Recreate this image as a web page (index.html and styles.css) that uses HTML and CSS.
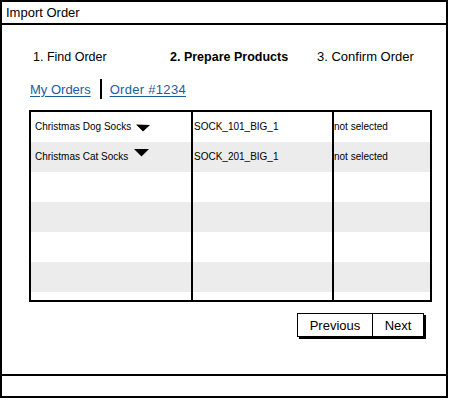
FILE: index.html
```html
<!DOCTYPE html>
<html>
<head>
<meta charset="utf-8">
<link rel="stylesheet" href="styles.css">
</head>
<body>
<div class="window">
  <div class="titlebar">Import Order</div>
  <div class="content">
    <div class="steps">
      <span class="step s1">1. Find Order</span>
      <span class="step s2 active">2. Prepare Products</span>
      <span class="step s3">3. Confirm Order</span>
    </div>
    <div class="crumbs">
      <a class="crumb" href="#">My Orders</a>
      <span class="sep"></span>
      <a class="crumb" href="#">Order #1234</a>
    </div>
    <div class="grid">
      <div class="row">
        <div class="cell c1">Christmas Dog Socks <svg class="tri t1" width="14" height="8" viewBox="0 0 14 8"><path d="M0 0.5 L14 1 L7 7.5 Z" fill="#000"/></svg></div>
        <div class="cell c2">SOCK_101_BIG_1</div>
        <div class="cell c3">not selected</div>
      </div>
      <div class="row alt">
        <div class="cell c1">Christmas Cat Socks <svg class="tri t2" width="15" height="8" viewBox="0 0 15 8"><path d="M0 0 L15 0 L7.5 7.5 Z" fill="#000"/></svg></div>
        <div class="cell c2">SOCK_201_BIG_1</div>
        <div class="cell c3">not selected</div>
      </div>
      <div class="row"><div class="cell c1"></div><div class="cell c2"></div><div class="cell c3"></div></div>
      <div class="row alt"><div class="cell c1"></div><div class="cell c2"></div><div class="cell c3"></div></div>
      <div class="row"><div class="cell c1"></div><div class="cell c2"></div><div class="cell c3"></div></div>
      <div class="row alt"><div class="cell c1"></div><div class="cell c2"></div><div class="cell c3"></div></div>
      <div class="row last"><div class="cell c1"></div><div class="cell c2"></div><div class="cell c3"></div></div>
    </div>
    <div class="actions">
      <div class="btngroup">
        <button class="btn prev">Previous</button>
        <button class="btn next">Next</button>
      </div>
    </div>
  </div>
  <div class="statusbar"></div>
</div>
</body>
</html>
```

FILE: styles.css
```css
html, body {
  margin: 0;
  padding: 0;
  background: #fff;
}
body {
  font-family: "Liberation Sans", Arial, sans-serif;
  color: #000;
}
.window {
  width: 448px;
  height: 398px;
  box-sizing: border-box;
  border: 2px solid #000;
  display: flex;
  flex-direction: column;
}
.titlebar {
  height: 23px;
  box-sizing: border-box;
  border-bottom: 2px solid #000;
  font-size: 13px;
  line-height: 21px;
  padding-left: 4px;
}
.content {
  flex: 1;
  display: flex;
  flex-direction: column;
}
.steps {
  display: flex;
  margin-top: 24px;
  padding-left: 31px;
  font-size: 12.5px;
  line-height: 16px;
}
.s1 { width: 137px; }
.s2 { width: 147px; }
.s3 { font-size: 13px; }
.active { font-weight: bold; }
.crumbs {
  display: flex;
  align-items: center;
  margin-top: 15px;
  padding-left: 28px;
  height: 18px;
  font-size: 13px;
}
.crumb {
  color: #1c5c9c;
  text-decoration: underline;
  text-underline-offset: 2px;
}
.crumb + .sep + .crumb { letter-spacing: 0.3px; }
.sep {
  width: 2px;
  height: 20px;
  background: #000;
  margin: 0 8px 0 9px;
}
.grid {
  margin-top: 12px;
  margin-left: 27px;
  width: 403px;
  box-sizing: border-box;
  border: 2px solid #000;
  display: flex;
  flex-direction: column;
  font-size: 10px;
}
.row {
  display: flex;
  height: 30px;
}
.row.alt { background: #ececec; }
.row.last { height: 8px; }
.cell {
  box-sizing: border-box;
  display: flex;
  align-items: center;
  white-space: nowrap;
  padding-bottom: 2px;
}
.c1 { width: 160px; padding-left: 4px; }
.c2 { width: 141px; border-left: 2px solid #000; padding-left: 1px; }
.c3 { flex: 1; border-left: 2px solid #000; padding-left: 0; }
.tri { margin-left: 5px; }
.tri.t1 { margin-top: 4px; }
.tri.t2 { margin-top: -6px; margin-left: 6px; }
.actions {
  display: flex;
  justify-content: flex-end;
  margin-top: 11px;
  padding-right: 22px;
}
.btngroup {
  display: flex;
  box-shadow: 2px 2px 0 #000;
}
.btn {
  font-family: "Liberation Sans", Arial, sans-serif;
  font-size: 13px;
  height: 24px;
  background: #fff;
  border: 1px solid #000;
  padding: 0;
  margin: 0;
  color: #000;
}
.prev { width: 76px; }
.next { width: 52px; border-left: 1px solid #000; margin-left: -1px; }
.statusbar {
  margin-top: auto;
  height: 22px;
  box-sizing: border-box;
  border-top: 2px solid #000;
}
```
